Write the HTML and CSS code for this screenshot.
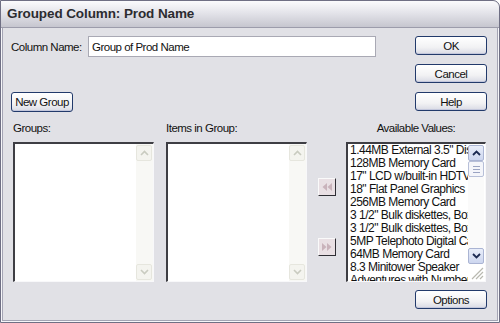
FILE: index.html
```html
<!DOCTYPE html>
<html lang="en">
<head>
  <meta charset="UTF-8">
  <title>Grouped Column: Prod Name</title>
  <link rel="stylesheet" href="styles.css">
</head>
<body>
  <div class="window">
    <div class="titlebar">Grouped Column: Prod Name</div>
    <div class="content">
      <div class="top">
        <div class="top-left">
          <div class="name-row">
            <label class="name-label" for="col-name">Column Name:</label>
            <input id="col-name" class="name-input" type="text" value="Group of Prod Name">
          </div>
          <button class="btn btn-new">New Group</button>
        </div>
        <div class="side-buttons">
          <button class="btn">OK</button>
          <button class="btn">Cancel</button>
          <button class="btn">Help</button>
        </div>
      </div>

      <div class="lists">
        <div class="col col-groups">
          <div class="col-label">Groups:</div>
          <div class="listbox">
            <div class="items"></div>
            <div class="scrollbar disabled">
              <div class="sb-btn"><svg width="9" height="6" viewBox="0 0 9 6"><path d="M1 5 L4.5 1.5 L8 5" fill="none" stroke="#c9cbc0" stroke-width="1.6"/></svg></div>
              <div class="sb-track"></div>
              <div class="sb-btn"><svg width="9" height="6" viewBox="0 0 9 6"><path d="M1 1 L4.5 4.5 L8 1" fill="none" stroke="#c9cbc0" stroke-width="1.6"/></svg></div>
            </div>
          </div>
        </div>

        <div class="col col-items">
          <div class="col-label">Items in Group:</div>
          <div class="listbox">
            <div class="items"></div>
            <div class="scrollbar disabled">
              <div class="sb-btn"><svg width="9" height="6" viewBox="0 0 9 6"><path d="M1 5 L4.5 1.5 L8 5" fill="none" stroke="#c9cbc0" stroke-width="1.6"/></svg></div>
              <div class="sb-track"></div>
              <div class="sb-btn"><svg width="9" height="6" viewBox="0 0 9 6"><path d="M1 1 L4.5 4.5 L8 1" fill="none" stroke="#c9cbc0" stroke-width="1.6"/></svg></div>
            </div>
          </div>
        </div>

        <div class="arrows">
          <button class="arrow-btn">
            <svg width="12" height="10" viewBox="0 0 12 10"><path d="M6 1 L1.5 5 L6 9 Z M11 1 L6.5 5 L11 9 Z" fill="#c9b3bb"/></svg>
          </button>
          <button class="arrow-btn">
            <svg width="12" height="10" viewBox="0 0 12 10"><path d="M1 1 L5.5 5 L1 9 Z M6 1 L10.5 5 L6 9 Z" fill="#c9b3bb"/></svg>
          </button>
        </div>

        <div class="col col-avail">
          <div class="col-label center">Available Values:</div>
          <div class="listbox">
            <div class="items">
              <div class="item">1.44MB External 3.5" Diskette Drive</div>
              <div class="item">128MB Memory Card</div>
              <div class="item">17" LCD w/built-in HDTV Tuner</div>
              <div class="item">18" Flat Panel Graphics Monitor</div>
              <div class="item">256MB Memory Card</div>
              <div class="item">3 1/2" Bulk diskettes, Box of 50</div>
              <div class="item">3 1/2" Bulk diskettes, Box of 100</div>
              <div class="item">5MP Telephoto Digital Camera</div>
              <div class="item">64MB Memory Card</div>
              <div class="item">8.3 Minitower Speaker</div>
              <div class="item">Adventures with Numbers</div>
            </div>
            <div class="scrollbar active">
              <div class="sb-btn"><svg width="9" height="6" viewBox="0 0 9 6"><path d="M1 5 L4.5 1.5 L8 5" fill="none" stroke="#1c2a52" stroke-width="1.8"/></svg></div>
              <div class="sb-thumb"><span></span><span></span><span></span></div>
              <div class="sb-track"></div>
              <div class="sb-btn"><svg width="9" height="6" viewBox="0 0 9 6"><path d="M1 1 L4.5 4.5 L8 1" fill="none" stroke="#1c2a52" stroke-width="1.8"/></svg></div>
              <div class="sb-grip">
                <svg width="14" height="14" viewBox="0 0 14 14"><path d="M13 2 L2 13 M13 6 L6 13 M13 10 L10 13" stroke="#b9b9b0" stroke-width="1.2"/></svg>
              </div>
            </div>
          </div>
        </div>
      </div>

      <div class="footer">
        <button class="btn">Options</button>
      </div>
    </div>
  </div>
</body>
</html>
```

FILE: styles.css
```css
* {
  margin: 0;
  padding: 0;
  box-sizing: border-box;
}

body {
  font-family: "Liberation Sans", Arial, sans-serif;
  font-size: 11.5px;
  letter-spacing: -0.5px;
  color: #111;
  background-color: #ffffff;
}

.window {
  width: 500px;
  height: 323px;
  background-color: #e1e1e6;
  border: 1px solid #6f6f84;
  border-top-right-radius: 7px;
  box-shadow: inset 0 0 0 1px #f6f6f9, inset 0 0 0 2px #a4a4b4;
  overflow: hidden;
}

.titlebar {
  height: 27px;
  line-height: 26px;
  padding-left: 6px;
  font-weight: bold;
  font-size: 13.5px;
  letter-spacing: -0.1px;
  color: #2c2c30;
  background: linear-gradient(#fbfbfd, #e4e4ea 45%, #c6c6cf);
  border-bottom: 1px solid #9c9cab;
  border-top-right-radius: 7px;
}

.content {
  padding: 8px 12px 0 10px;
}

.top {
  display: flex;
  justify-content: space-between;
  height: 76px;
}

.top-left {
  display: flex;
  flex-direction: column;
  justify-content: space-between;
}

.name-row {
  display: flex;
  align-items: center;
}

.name-label {
  width: 77px;
  white-space: nowrap;
}

.name-input {
  width: 288px;
  height: 21px;
  padding: 0 3px;
  font: inherit;
  letter-spacing: inherit;
  color: #111;
  background: #fff;
  border: 1px solid #a9a9b4;
  outline: none;
}

.side-buttons {
  display: flex;
  flex-direction: column;
  gap: 9px;
}

.btn {
  width: 72px;
  height: 19px;
  font: inherit;
  letter-spacing: inherit;
  white-space: nowrap;
  color: #111;
  background: linear-gradient(#ffffff, #f2f2f4 60%, #d9dae4);
  border: 1px solid #223a6b;
  border-radius: 3px;
  box-shadow: inset 0 -1px 0 #c3c7dc;
}

.btn-new {
  width: 62px;
  height: 20px;
}

.lists {
  display: flex;
  margin-top: 9px;
  padding-left: 2px;
}

.col {
  display: flex;
  flex-direction: column;
}

.col-groups,
.col-items {
  width: 141px;
}

.col-groups {
  margin-right: 12px;
}

.col-avail {
  width: 140px;
}

.col-label {
  height: 15px;
  line-height: 15px;
  margin-bottom: 6px;
  white-space: nowrap;
}

.col-label.center {
  text-align: center;
}

.listbox {
  display: flex;
  height: 140px;
  background: #fff;
  border-top: 2px solid #3e3e44;
  border-left: 2px solid #3e3e44;
  border-right: 1px solid #f8f8fa;
  border-bottom: 1px solid #f8f8fa;
  overflow: hidden;
}

.items {
  flex: 1;
  min-width: 0;
  padding: 0 0 0 2px;
  overflow: hidden;
}

.item {
  height: 13px;
  line-height: 13px;
  font-size: 12px;
  white-space: nowrap;
  overflow: hidden;
}

.scrollbar {
  width: 17px;
  display: flex;
  flex-direction: column;
  padding: 1px 1px 1px 0;
}

.scrollbar.disabled {
  background: #f8f8f5;
}

.sb-btn {
  height: 16px;
  display: flex;
  align-items: center;
  justify-content: center;
  border-radius: 2px;
}

.disabled .sb-btn {
  background: #f4f4ef;
  border: 1px solid #e6e6de;
}

.sb-track {
  flex: 1;
}

.active .sb-btn {
  background: linear-gradient(#e9eefa, #cdd6ef);
  border: 1px solid #aab4d3;
}

.sb-thumb {
  height: 16px;
  display: flex;
  flex-direction: column;
  align-items: center;
  justify-content: center;
  gap: 2px;
  background: #f4f5fa;
  border: 1px solid #b7bfd8;
  border-radius: 2px;
}

.sb-thumb span {
  width: 7px;
  height: 1px;
  background: #9aa3c2;
}

.active .sb-track {
  background: #fafafa;
}

.sb-grip {
  height: 16px;
  display: flex;
  align-items: flex-end;
  justify-content: flex-end;
}

.arrows {
  width: 18px;
  margin: 0 10px 0 11px;
  padding-top: 57px;
  display: flex;
  flex-direction: column;
  gap: 42px;
}

.arrow-btn {
  width: 18px;
  height: 18px;
  display: flex;
  align-items: center;
  justify-content: center;
  background: #e9e0e4;
  border-top: 1px solid #fafafa;
  border-left: 1px solid #fafafa;
  border-right: 1px solid #2e2e34;
  border-bottom: 1px solid #2e2e34;
}

.footer {
  display: flex;
  justify-content: flex-end;
  margin-top: 8px;
}
```
